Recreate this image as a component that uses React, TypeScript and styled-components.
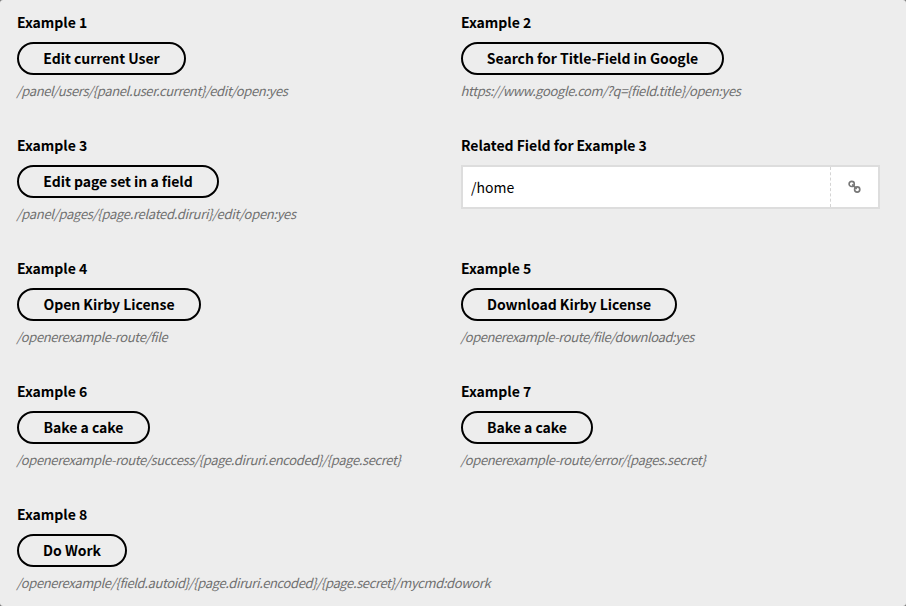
import React from "react";
import styled, { createGlobalStyle } from "styled-components";

const GlobalStyle = createGlobalStyle`
  *, *::before, *::after { box-sizing: border-box; }
  body { margin: 0; background: #777; }
`;

const Panel = styled.main`
  width: 906px;
  height: 606px;
  padding: 11px 26px 0 17px;
  overflow: hidden;
  display: grid;
  grid-template-columns: 419px 419px;
  grid-auto-rows: 123px;
  column-gap: 25px;
  border-radius: 3px;
  background: #ededed;
  color: #000;
  font-family: "Noto Sans CJK SC", "Noto Sans", sans-serif;
`;

const Field = styled.section<{ $wide?: boolean }>`
  grid-column: ${(p) => (p.$wide ? "1 / -1" : "auto")};
  display: flex;
  flex-direction: column;
  align-items: flex-start;
  white-space: nowrap;
`;

const Label = styled.label`
  height: 31px;
  font-size: 14px;
  font-weight: 700;
  line-height: 22px;
  letter-spacing: -0.03px;
`;

const OpenButton = styled.button<{ $width: number }>`
  width: ${(p) => p.$width}px;
  height: 33px;
  padding: 0;
  border: 2px solid #000;
  border-radius: 17px;
  background: transparent;
  color: #000;
  font: 700 14px/29px "Noto Sans CJK SC", "Noto Sans", sans-serif;
  letter-spacing: -0.03px;
  white-space: nowrap;
`;

const Help = styled.p<{ $tracking: number }>`
  margin: 6px 0 0 -0.5px;
  color: #707070;
  font-size: 13px;
  font-style: italic;
  line-height: 20px;
  letter-spacing: ${(p) => p.$tracking}px;
`;

const InputBox = styled.div`
  display: flex;
  width: 419px;
  height: 44px;
  border: 2px solid #ddd;
  background: #fff;
`;

const Input = styled.input`
  flex: 1;
  min-width: 0;
  padding: 0 8px;
  border: 0;
  outline: 0;
  background: transparent;
  color: #000;
  font: 400 14px/20px "Noto Sans CJK SC", "Noto Sans", sans-serif;
`;

const LinkSlot = styled.span`
  width: 48px;
  display: flex;
  align-items: center;
  justify-content: center;
  border-left: 1px dashed #d4d4d4;
`;

const LinkIcon = () => (
  <svg width="14" height="14" viewBox="0 0 14 14" fill="none" stroke="#777" strokeWidth="1.65">
    <circle cx="3.7" cy="3.9" r="2.6" />
    <circle cx="9.2" cy="9.5" r="2.6" />
    <path d="M4.2 4.4l4.5 4.6" />
  </svg>
);

type Example = {
  label: string;
  button?: string;
  width?: number;
  help?: string;
  tracking?: number;
  value?: string;
  wide?: boolean;
};

const examples: Example[] = [
  { label: "Example 1", button: "Edit current User", width: 169, help: "/panel/users/{panel.user.current}/edit/open:yes", tracking: -0.38 },
  { label: "Example 2", button: "Search for Title-Field in Google", width: 263, help: "https://www.google.com/?q={field.title}/open:yes", tracking: -0.4 },
  { label: "Example 3", button: "Edit page set in a field", width: 202, help: "/panel/pages/{page.related.diruri}/edit/open:yes", tracking: -0.31 },
  { label: "Related Field for Example 3", value: "/home" },
  { label: "Example 4", button: "Open Kirby License", width: 184, help: "/openerexample-route/file", tracking: -0.39 },
  { label: "Example 5", button: "Download Kirby License", width: 216, help: "/openerexample-route/file/download:yes", tracking: -0.43 },
  { label: "Example 6", button: "Bake a cake", width: 133, help: "/openerexample-route/success/{page.diruri.encoded}/{page.secret}", tracking: -0.37 },
  { label: "Example 7", button: "Bake a cake", width: 132, help: "/openerexample-route/error/{pages.secret}", tracking: -0.39 },
  { label: "Example 8", button: "Do Work", width: 110, help: "/openerexample/{field.autoid}/{page.diruri.encoded}/{page.secret}/mycmd:dowork", tracking: -0.385, wide: true },
];

export default function App() {
  return (
    <>
      <GlobalStyle />
      <Panel>
        {examples.map((item) => (
          <Field key={item.label} $wide={item.wide}>
            <Label>{item.label}</Label>
            {item.value !== undefined ? (
              <InputBox>
                <Input defaultValue={item.value} aria-label={item.label} />
                <LinkSlot>
                  <LinkIcon />
                </LinkSlot>
              </InputBox>
            ) : (
              <>
                <OpenButton $width={item.width ?? 0}>{item.button}</OpenButton>
                <Help $tracking={item.tracking ?? 0}>{item.help}</Help>
              </>
            )}
          </Field>
        ))}
      </Panel>
    </>
  );
}
